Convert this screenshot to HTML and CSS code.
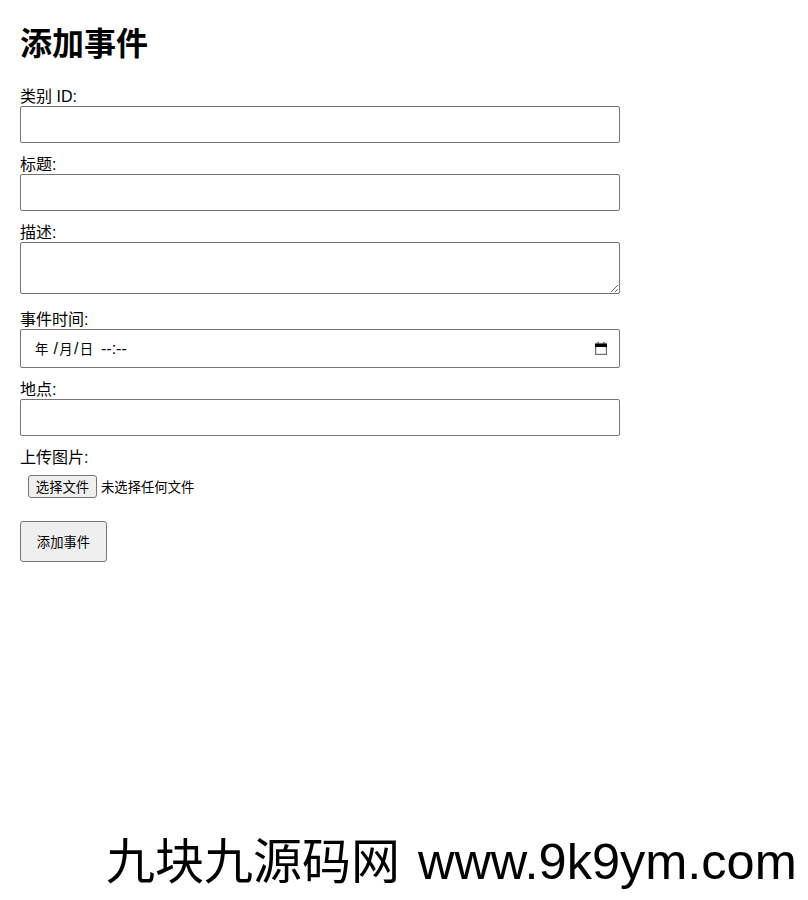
FILE: index.html
```html
<!DOCTYPE html>
<html lang="zh-CN">
<head>
<meta charset="utf-8">
<title>添加事件</title>
<link rel="stylesheet" href="styles.css">
</head>
<body>
<h1 class="title">添加事件</h1>
<form class="form">
  <label class="label">类别 ID:</label>
  <input class="field" type="text">
  <label class="label">标题:</label>
  <input class="field" type="text">
  <label class="label">描述:</label>
  <textarea class="field area"></textarea>
  <label class="label">事件时间:</label>
  <div class="field date">
    <span class="date-text"><span class="part">年</span><span class="sep">/</span><span class="part">月</span><span class="sep">/</span><span class="part">日</span><span class="time">--:--</span></span>
    <svg class="cal" width="12" height="13" viewBox="0 0 12 13" aria-hidden="true">
      <rect x="0.6" y="1.5" width="10.8" height="10.9" fill="none" stroke="#6f6f6f" stroke-width="1.2"/>
      <rect x="0" y="2" width="12" height="3" fill="#000"/>
      <rect x="2.5" y="0" width="1.2" height="2" fill="#444"/>
      <rect x="8.3" y="0" width="1.2" height="2" fill="#444"/>
    </svg>
  </div>
  <label class="label">地点:</label>
  <input class="field" type="text">
  <label class="label">上传图片:</label>
  <div class="file">
    <button class="file-btn" type="button">选择文件</button>
    <span class="file-name">未选择任何文件</span>
  </div>
  <button class="submit" type="button">添加事件</button>
</form>
<div class="watermark"><span class="wm-cjk">九块九源码网</span> <span class="wm-url">www.9k9ym.com</span></div>
</body>
</html>
```
FILE: styles.css
```css
html, body { height: 100%; }
body {
  margin: 0;
  padding: 20px;
  box-sizing: border-box;
  position: relative;
  overflow: hidden;
  background: #fff;
  color: #000;
  font-family: "Liberation Sans", Arial, "Noto Sans CJK SC", sans-serif;
  font-size: 16px;
}
.title {
  margin: 0 0 20px;
  font-size: 32px;
  line-height: 48px;
  font-weight: 700;
}
.form { display: block; }
.label {
  display: block;
  height: 18px;
  line-height: 18px;
}
.field {
  display: block;
  box-sizing: border-box;
  width: 600px;
  height: 37px;
  margin: 0 0 13px;
  padding: 10px;
  border: 1px solid #767676;
  border-radius: 2px;
  background: #fff;
  font: 13.33px "Liberation Sans", "Noto Sans CJK SC", sans-serif;
}
.area { height: 52px; margin-bottom: 17px; }
.date {
  display: flex;
  align-items: center;
  justify-content: space-between;
  height: 39px;
  padding: 0 12px 0 14px;
}
.date-text { display: flex; align-items: center; }
.part { width: 13.33px; }
.sep { width: 7px; font-size: 16px; text-align: center; }
.part:first-child { margin-right: 4px; }
.time { margin-left: 8px; font-size: 16px; }
.cal { display: block; }
.file {
  display: flex;
  align-items: center;
  gap: 4px;
  margin: 8px 0 0;
  padding: 0 0 0 8px;
  font: 13.33px "Liberation Sans", "Noto Sans CJK SC", sans-serif;
}
.file-btn {
  box-sizing: border-box;
  width: 69px;
  height: 23px;
  margin: 0;
  padding: 0;
  border: 1px solid #767676;
  border-radius: 3px;
  background: #efefef;
  color: #000;
  font: inherit;
}
.file-name { white-space: nowrap; }
.submit {
  display: block;
  box-sizing: border-box;
  width: 87px;
  height: 41px;
  margin: 23px 0 0;
  padding: 0;
  border: 1px solid #767676;
  border-radius: 3px;
  background: #efefef;
  color: #000;
  font: 13.33px "Liberation Sans", "Noto Sans CJK SC", sans-serif;
}
.watermark {
  position: absolute;
  left: 106px;
  top: 832px;
  white-space: nowrap;
  font-size: 50px;
  line-height: 60px;
  color: #000;
}
.wm-cjk { font-size: 49px; }
.wm-url { font-size: 50.5px; margin-left: 4px; }
```
